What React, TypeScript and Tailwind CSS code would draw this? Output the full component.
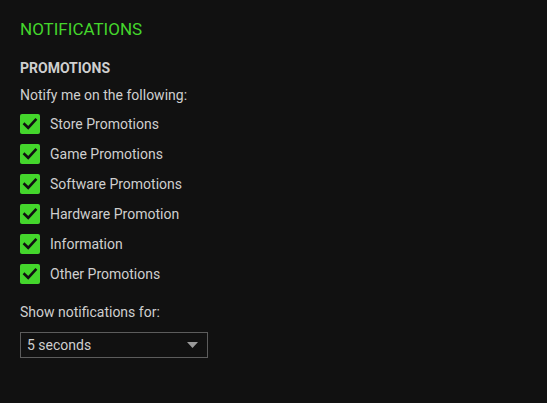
const options = [
  "Store Promotions",
  "Game Promotions",
  "Software Promotions",
  "Hardware Promotion",
  "Information",
  "Other Promotions",
];

function CheckBox() {
  return (
    <span className="w-5 h-5 rounded-[2px] bg-[#44d62c] flex items-center justify-center shrink-0">
      <svg width="16" height="16" viewBox="0 0 16 16" fill="none">
        <path d="M2.5 8.2 L6.2 11.8 L13.5 3.8" stroke="#111" strokeWidth="2.6" strokeLinecap="square" />
      </svg>
    </span>
  );
}

export default function App() {
  return (
    <div
      className="w-[547px] h-[403px] bg-[#111111] px-5 pt-[17px] text-[#cfcfcf]"
      style={{ fontFamily: "Roboto, 'Noto Sans', sans-serif" }}
    >
      <h1 className="text-[17px] leading-6 text-[#44d62c]">NOTIFICATIONS</h1>
      <h2 className="mt-[17px] text-[14px] font-bold leading-5 text-[#cfcfcf]">PROMOTIONS</h2>
      <p className="mt-[7px] text-[14px] leading-5">Notify me on the following:</p>
      <ul className="mt-[9px] flex flex-col gap-[10px]">
        {options.map((o) => (
          <li key={o} className="flex items-center gap-[10px] h-5">
            <CheckBox />
            <span className="text-[14px] leading-5">{o}</span>
          </li>
        ))}
      </ul>
      <p className="mt-[18px] text-[14px] leading-5">Show notifications for:</p>
      <div className="mt-[10px] w-[188px] h-[26px] border border-[#5c5c5c] flex items-center justify-between pl-[6px] pr-[9px]">
        <span className="text-[14px] leading-5">5 seconds</span>
        <svg width="11" height="6" viewBox="0 0 11 6">
          <path d="M0 0 H11 L5.5 6 Z" fill="#9a9a9a" />
        </svg>
      </div>
    </div>
  );
}
